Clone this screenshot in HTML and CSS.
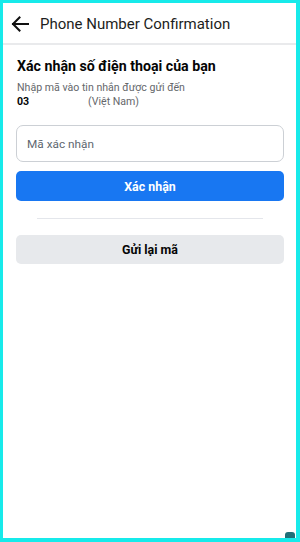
FILE: index.html
```html
<!DOCTYPE html>
<html lang="vi">
<head>
<meta charset="utf-8">
<link rel="stylesheet" href="styles.css">
</head>
<body>
<div class="frame">
  <header class="topbar">
    <svg class="back" width="18" height="16" viewBox="0 0 18 16" aria-hidden="true">
      <path d="M17 8H2M8.5 1.5L2 8l6.5 6.5" fill="none" stroke="#111" stroke-width="2" stroke-linecap="square"/>
    </svg>
    <span class="title">Phone Number Confirmation</span>
  </header>
  <main class="content">
    <h1 class="heading">Xác nhận số điện thoại của bạn</h1>
    <p class="sub">Nhập mã vào tin nhắn được gửi đến</p>
    <p class="phone"><b>03</b><span class="country">(Việt Nam)</span></p>
    <div class="input">Mã xác nhận</div>
    <button class="btn primary">Xác nhận</button>
    <div class="divider"></div>
    <button class="btn secondary">Gửi lại mã</button>
  </main>
  <div class="badge"></div>
</div>
</body>
</html>
```
FILE: styles.css
```css
* { box-sizing: border-box; }
html, body { margin: 0; padding: 0; }
body { font-family: Roboto, "Liberation Sans", sans-serif; color: #1c1e21; }
.frame {
  position: relative;
  width: 300px;
  height: 542px;
  border-style: solid;
  border-color: #17eaea;
  border-width: 3px 4px 4px 3px;
  background: #fff;
}
.topbar {
  height: 42px;
  display: flex;
  align-items: center;
  border-bottom: 2px solid #e9eaec;
  padding-left: 8px;
}
.back { flex: none; margin-top: 2px; }
.title { margin-left: 11px; font-size: 15px; color: #1c1e21; margin-top: 2px; }
.content { padding: 12px 12px 0 14px; display: flex; flex-direction: column; }
.heading { margin: 0; font-size: 14.2px; font-weight: 700; line-height: 19px; color: #050505; }
.sub { margin: 5px 0 0; font-size: 10.6px; line-height: 14px; color: #65676b; }
.phone { margin: 0; font-size: 10.6px; line-height: 14px; }
.phone b { color: #050505; font-weight: 700; display: inline-block; width: 71px; }
.country { color: #65676b; }
.input {
  margin-top: 16px;
  height: 37px;
  margin-left: -1px;
  border: 1px solid #ccd0d5;
  border-radius: 7px;
  padding: 0 10px;
  display: flex;
  align-items: center;
  font-size: 11.8px;
  color: #606770;
}
.btn {
  font-family: inherit;
  border: 0;
  border-radius: 5px;
  font-size: 12.4px;
  font-weight: 700;
  padding: 0;
  margin-left: -1px;
}
.primary { margin-top: 9px; height: 30px; background: #1877f2; color: #fff; }
.divider { margin: 17px 21px 0 20px; height: 1px; background: #e4e6eb; }
.secondary { margin-top: 16px; height: 29px; background: #e7e9ec; color: #050505; }
.badge {
  position: absolute;
  right: 1px;
  bottom: 0;
  width: 10px;
  height: 6px;
  background: #1f6f78;
  border-radius: 3px 3px 0 0;
}
```
